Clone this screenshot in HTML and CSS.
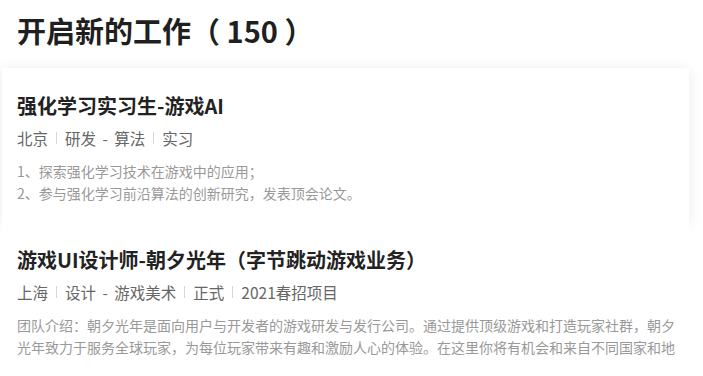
FILE: index.html
```html
<!DOCTYPE html>
<html lang="zh-CN">
<head>
<meta charset="utf-8">
<title>开启新的工作</title>
<link rel="stylesheet" href="styles.css">
</head>
<body>
<div class="page">
  <h1 class="heading">开启新的工作（ 150 ）</h1>
  <div class="list">
    <div class="card card-active">
      <h2 class="job-title">强化学习实习生-游戏AI</h2>
      <div class="meta">
        <span>北京</span><i class="sep"></i><span>研发 - 算法</span><i class="sep"></i><span>实习</span>
      </div>
      <div class="desc">
        <p>1、探索强化学习技术在游戏中的应用；</p>
        <p>2、参与强化学习前沿算法的创新研究，发表顶会论文。</p>
      </div>
    </div>
    <div class="card">
      <h2 class="job-title">游戏UI设计师-朝夕光年（字节跳动游戏业务）</h2>
      <div class="meta">
        <span>上海</span><i class="sep"></i><span>设计 - 游戏美术</span><i class="sep"></i><span>正式</span><i class="sep"></i><span>2021春招项目</span>
      </div>
      <div class="desc">
        <p>团队介绍：朝夕光年是面向用户与开发者的游戏研发与发行公司。通过提供顶级游戏和打造玩家社群，朝夕光年致力于服务全球玩家，为每位玩家带来有趣和激励人心的体验。在这里你将有机会和来自不同国家和地区的优秀伙伴一起工作。</p>
      </div>
    </div>
  </div>
</div>
</body>
</html>
```

FILE: styles.css
```css
html, body {
  margin: 0;
  padding: 0;
  background: #ffffff;
  overflow: hidden;
}
body {
  font-family: "Noto Sans CJK SC", "Noto Sans", "Liberation Sans", sans-serif;
  color: #222222;
}
.page {
  padding: 0 14px 0 2px;
}
.heading {
  margin: 0;
  padding: 10px 0 0 15px;
  height: 40px;
  font-size: 29px;
  line-height: 40px;
  font-weight: 700;
  color: #1f1f1f;
  margin-bottom: 18px;
  white-space: pre;
}
.list {
  display: flex;
  flex-direction: column;
}
.card {
  padding: 24px 10px 18px 15px;
  height: 112px;
  overflow: hidden;
  background: #ffffff;
}
.card-active {
  box-shadow: 0 2px 14px rgba(0, 0, 0, 0.09);
}
.job-title {
  margin: 0;
  font-size: 20px;
  line-height: 28px;
  font-weight: 700;
  color: #222222;
  white-space: nowrap;
}
.meta {
  margin-top: 6px;
  display: flex;
  align-items: center;
  gap: 8px;
  font-size: 15.5px;
  line-height: 24px;
  color: #666666;
  word-spacing: 3px;
  white-space: pre;
}
.sep {
  display: block;
  width: 1px;
  height: 12px;
  background: #d6d6d6;
}
.desc {
  margin-top: 10px;
  font-size: 14px;
  line-height: 22px;
  color: #999999;
  max-height: 44px;
  overflow: hidden;
}
.desc p {
  margin: 0;
}
```
